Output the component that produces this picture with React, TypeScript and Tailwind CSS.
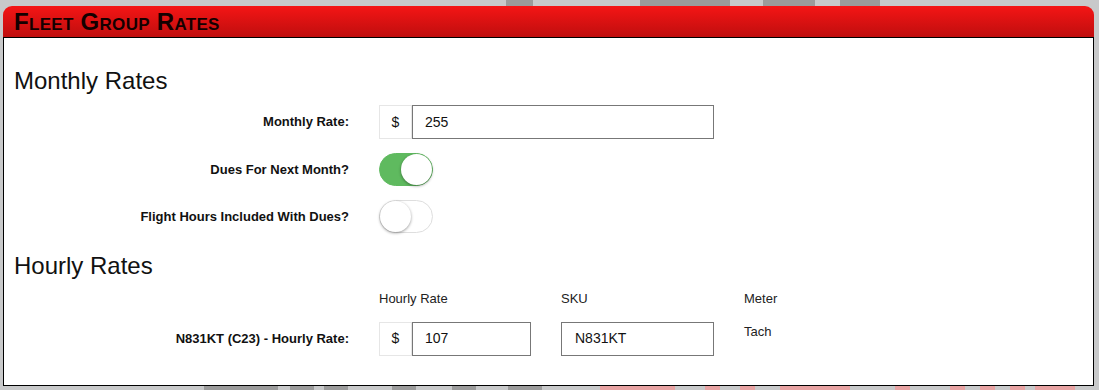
import React from 'react';

const font = { fontFamily: '"Liberation Sans", Arial, sans-serif' };

const Toggle = ({ on }: { on: boolean }) => (
  <div
    className={
      'relative w-[54px] h-[33px] rounded-full border ' +
      (on ? 'bg-[#5fba5f] border-[#5fba5f]' : 'bg-white border-[#dedede]')
    }
  >
    <div
      className={
        'absolute top-[0px] w-[31px] h-[31px] rounded-full bg-white shadow-[0_1px_3px_rgba(0,0,0,0.4)] ' +
        (on ? 'right-0' : 'left-0')
      }
    />
  </div>
);

const Row = ({ label, children, className }: { label: string; children: React.ReactNode; className?: string }) => (
  <div className={'flex items-center ' + (className ?? '')}>
    <div className="w-[345px] text-right text-[13px] font-bold text-[#111]">{label}</div>
    <div className="ml-[30px]">{children}</div>
  </div>
);

const MoneyInput = ({ value, width }: { value: string; width: string }) => (
  <div className="flex h-[34px]">
    <div className="w-[33px] flex items-center justify-center border border-[#e6e6e6] text-[14px] text-[#111]">$</div>
    <div className={'flex items-center border border-[#777] pl-[12px] text-[14px] text-[#111] ' + width}>{value}</div>
  </div>
);

const BgStrip = ({ segs }: { segs: [number, string][] }) => (
  <div className="flex h-full">
    {segs.map(([w, c], i) => (
      <div key={i} className="h-full" style={{ width: w, background: c }} />
    ))}
  </div>
);

export default function App() {
  return (
    <div className="w-[1099px] h-[390px] bg-[#c8c9ca] overflow-hidden" style={font}>
      <div className="h-[6px]">
        <BgStrip
          segs={[
            [506, '#c8c9ca'],
            [27, '#9b9b9b'],
            [107, '#c8c9ca'],
            [90, '#9b9b9b'],
            [33, '#c8c9ca'],
            [52, '#9b9b9b'],
            [25, '#c8c9ca'],
            [40, '#9b9b9b'],
          ]}
        />
      </div>
      <div className="ml-[3px] w-[1091px]">
        <div className="h-[32px] rounded-t-[9px] bg-gradient-to-b from-[#f51515] to-[#bf0e0e] border-b border-black flex items-center pl-[11px]">
          <span className="text-[24px] leading-[28px] font-bold text-[#140000] [font-variant:small-caps] tracking-[0.3px]">Fleet Group Rates</span>
        </div>
        <div className="bg-white border-x border-b border-black h-[348px]">
          <div className="pl-[10px] pt-[29px] text-[24px] leading-[28px] text-[#111]">Monthly Rates</div>
          <Row label="Monthly Rate:" className="mt-[10px]">
            <MoneyInput value="255" width="w-[302px]" />
          </Row>
          <Row label="Dues For Next Month?" className="mt-[14px]">
            <Toggle on />
          </Row>
          <Row label="Flight Hours Included With Dues?" className="mt-[14px]">
            <Toggle on={false} />
          </Row>
          <div className="pl-[10px] pt-[19px] text-[24px] leading-[28px] text-[#111]">Hourly Rates</div>
          <div className="flex mt-[9px] text-[13px] text-[#222]">
            <div className="w-[375px]" />
            <div className="w-[182px]">Hourly Rate</div>
            <div className="w-[183px]">SKU</div>
            <div>Meter</div>
          </div>
          <div className="flex mt-[13px]">
            <div className="w-[345px] h-[34px] flex items-center justify-end text-[13px] font-bold text-[#111]">
              N831KT (C23) - Hourly Rate:
            </div>
            <div className="ml-[30px]">
              <MoneyInput value="107" width="w-[119px]" />
            </div>
            <div className="ml-[30px] w-[153px] h-[34px] flex items-center border border-[#777] pl-[13px] text-[14px] text-[#111]">
              N831KT
            </div>
            <div className="ml-[30px] text-[13px] text-[#222]">Tach</div>
          </div>
        </div>
        <div className="h-[4px] -ml-[3px]">
          <BgStrip
            segs={[
              [204, '#c8c9ca'],
              [74, '#9b9b9b'],
              [12, '#c8c9ca'],
              [24, '#9b9b9b'],
              [10, '#c8c9ca'],
              [24, '#9b9b9b'],
              [44, '#c8c9ca'],
              [24, '#9b9b9b'],
              [36, '#c8c9ca'],
              [24, '#9b9b9b'],
              [32, '#c8c9ca'],
              [34, '#9b9b9b'],
              [58, '#c8c9ca'],
              [75, '#e8a3a3'],
              [30, '#c8c9ca'],
              [15, '#e8a3a3'],
              [20, '#c8c9ca'],
              [15, '#e8a3a3'],
              [25, '#c8c9ca'],
              [70, '#e8a3a3'],
              [45, '#c8c9ca'],
              [15, '#e8a3a3'],
              [40, '#c8c9ca'],
              [15, '#e8a3a3'],
              [15, '#c8c9ca'],
              [15, '#e8a3a3'],
              [15, '#c8c9ca'],
              [15, '#e8a3a3'],
              [10, '#c8c9ca'],
              [40, '#e8a3a3'],
            ]}
          />
        </div>
      </div>
    </div>
  );
}
